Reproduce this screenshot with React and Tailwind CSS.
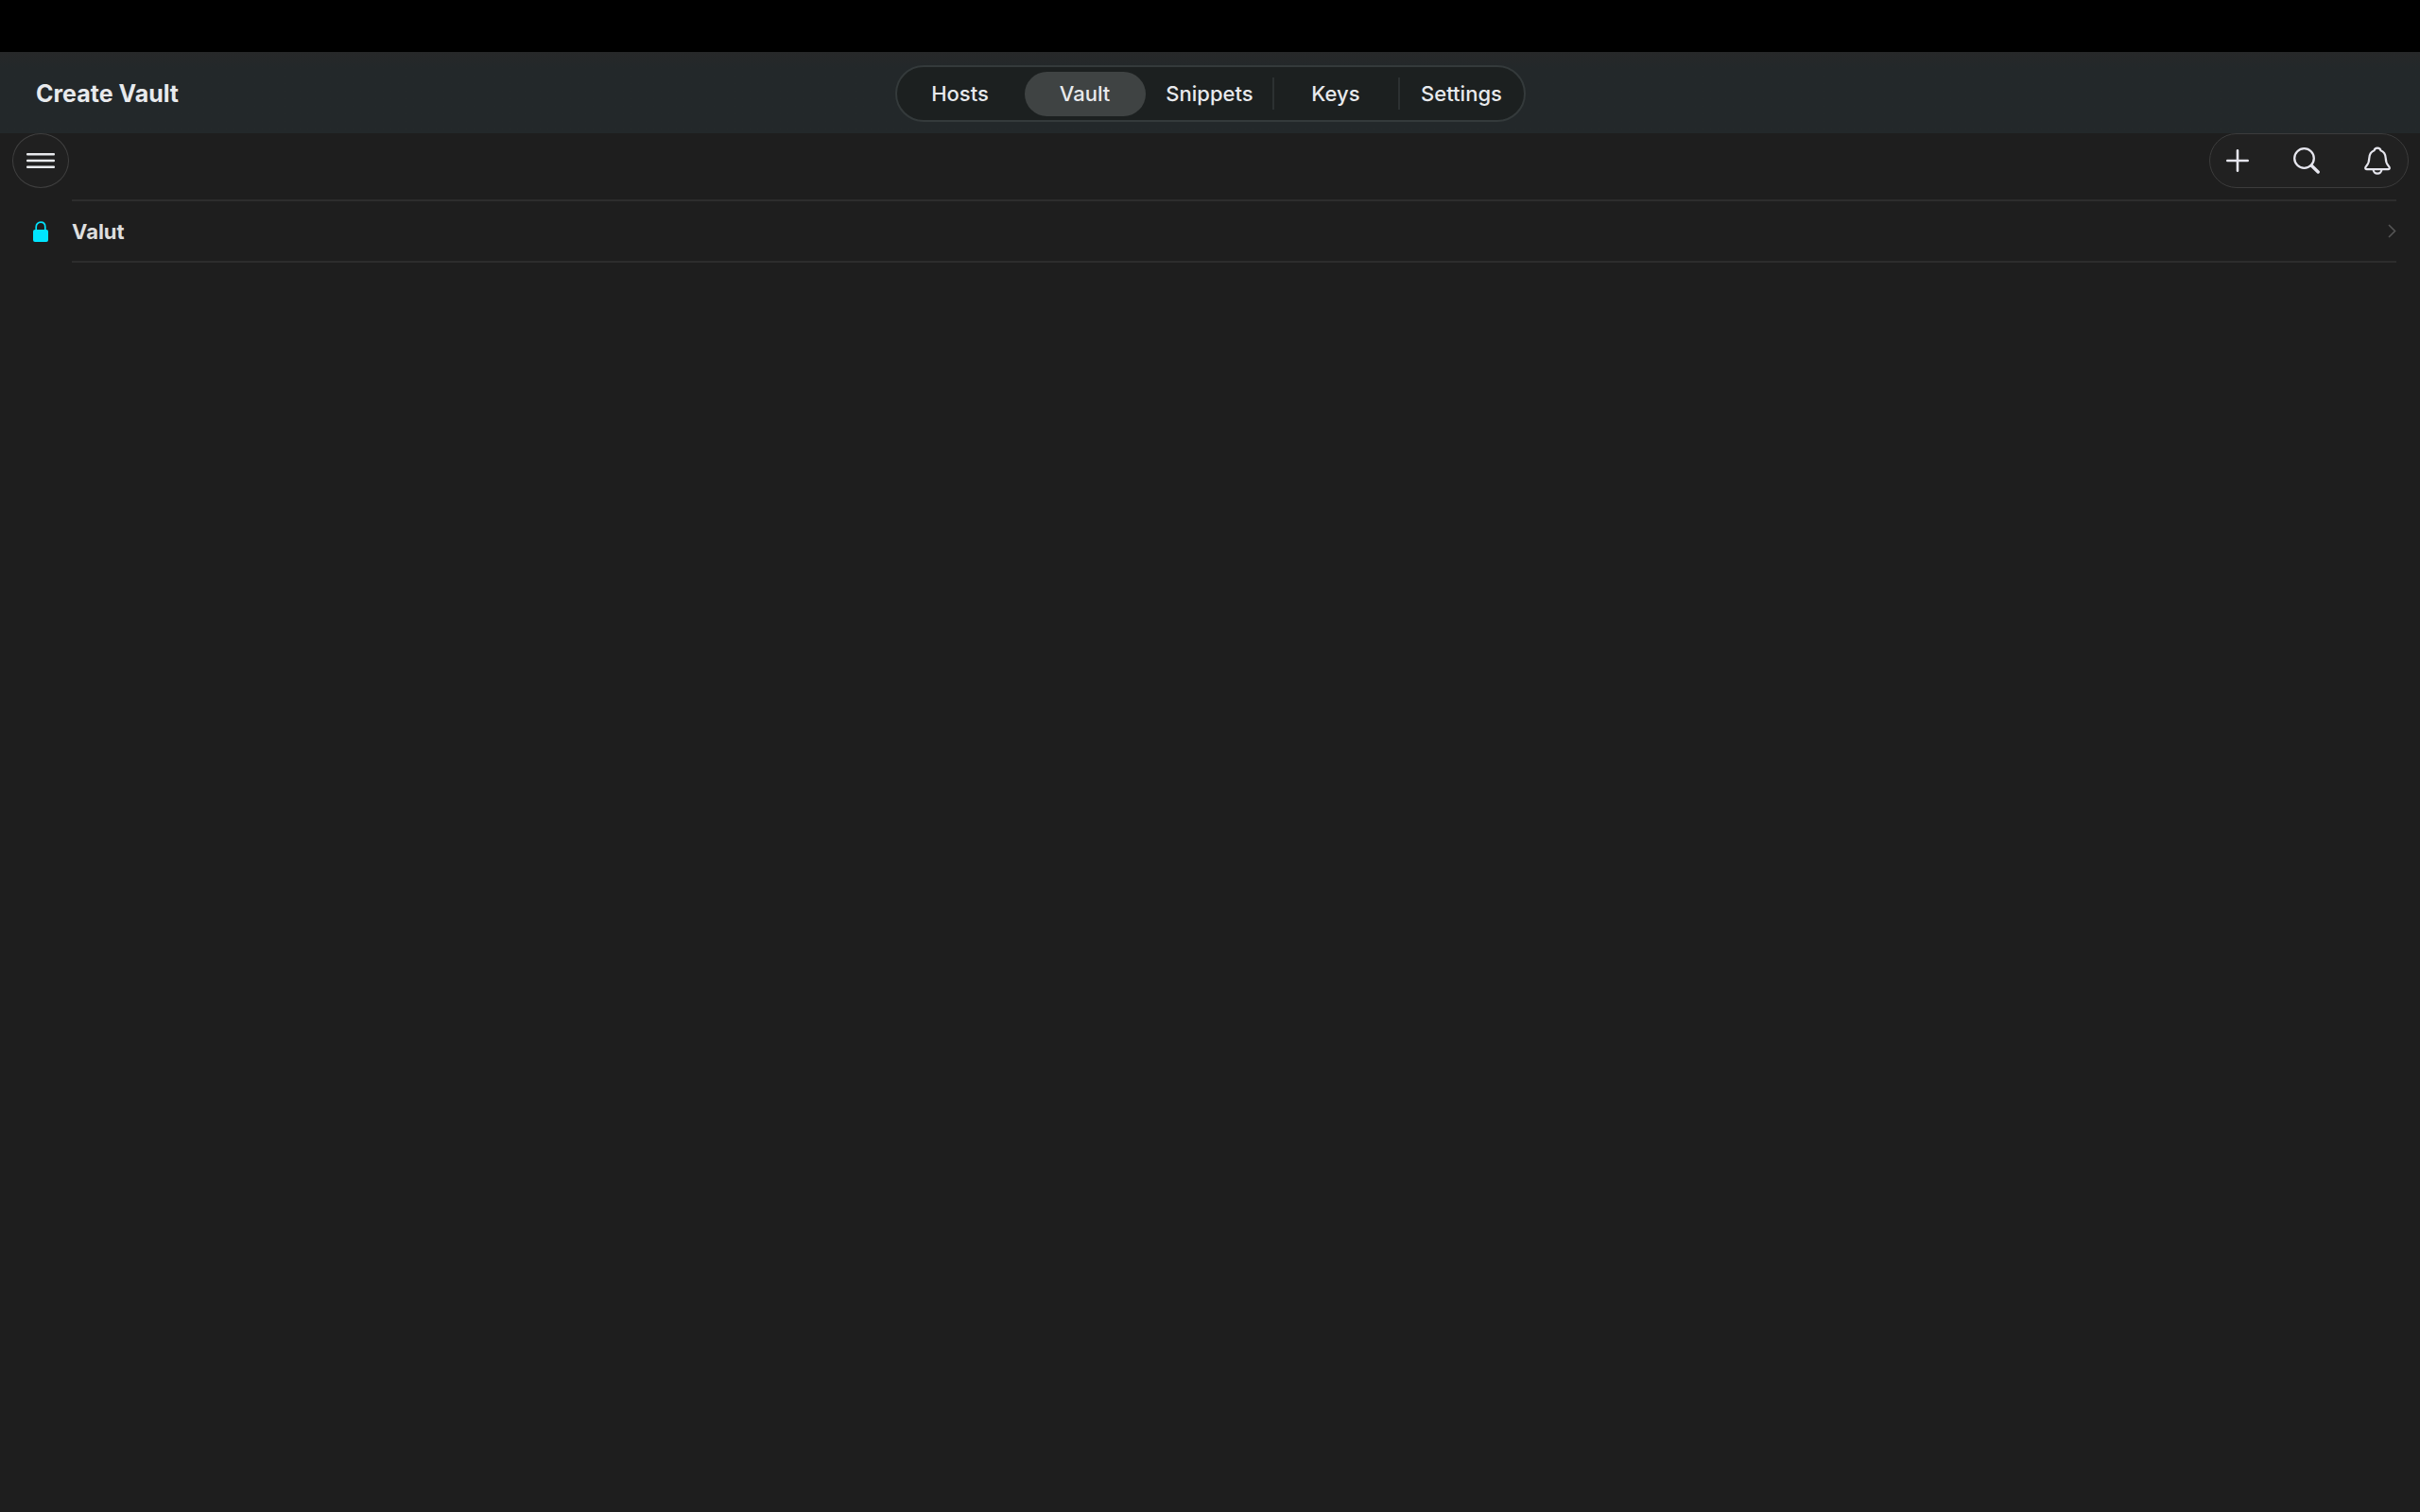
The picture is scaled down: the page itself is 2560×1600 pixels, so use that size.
const tabs = [
  { label: 'Hosts' },
  { label: 'Vault', active: true },
  { label: 'Snippets' },
  { label: 'Keys', divided: true },
  { label: 'Settings', divided: true },
];

function MenuIcon() {
  return (
    <svg className="h-4 w-[30px]" viewBox="0 0 30 16" fill="currentColor" aria-hidden="true">
      <rect width="30" height="2.6" rx="1" />
      <rect y="6.7" width="30" height="2.6" rx="1" />
      <rect y="13.4" width="30" height="2.6" rx="1" />
    </svg>
  );
}

function PlusIcon() {
  return (
    <svg className="size-6" viewBox="0 0 24 24" fill="none" stroke="currentColor" strokeWidth="2.6" strokeLinecap="round" aria-hidden="true">
      <path d="M12 1.3v21.400M1.300 12h21.400" />
    </svg>
  );
}

function SearchIcon() {
  return (
    <svg className="size-7" viewBox="0 0 28 28" fill="none" stroke="currentColor" strokeLinecap="round" aria-hidden="true">
      <circle cx="11.5" cy="11.5" r="10.3" strokeWidth="2.3" />
      <path d="M19.3 19.3 26.2 26" strokeWidth="3.4" />
    </svg>
  );
}

function BellIcon() {
  return (
    <svg className="h-[30px] w-7" viewBox="0 0 28 30" fill="none" stroke="currentColor" strokeWidth="2.2" strokeLinejoin="round" strokeLinecap="round" aria-hidden="true">
      <path d="M14 1.600c-1.800 0-3.200 1.200-3.500 2.700C7.300 5.600 5.500 8.600 5.300 12.300 5.100 16.500 4.600 18.200 2.600 20.300 1.700 21.300 1.200 22 1.200 22.800c0 .8.600 1.300 1.500 1.300h22.600c.9 0 1.500-.5 1.500-1.300 0-.8-.5-1.500-1.400-2.500-2-2.100-2.500-3.800-2.700-8-.2-3.700-2-6.700-5.200-8C17.200 2.800 15.800 1.600 14 1.600Z" />
      <path d="M9.600 24.300c0 2.500 1.900 4.400 4.400 4.400s4.400-1.900 4.400-4.400" />
    </svg>
  );
}

function LockIcon() {
  return (
    <svg className="h-[22px] w-4 text-[#00e5ff]" viewBox="0 0 16 22" aria-hidden="true">
      <path d="M3.200 11V6.200C3.200 3.200 5.200 1.200 8 1.200s4.800 2 4.800 5V11" fill="none" stroke="currentColor" strokeWidth="1.700" />
      <rect y="9" width="16" height="13" rx="2" fill="currentColor" />
    </svg>
  );
}

function ChevronIcon() {
  return (
    <svg className="h-[15px] w-[9px] text-[#555]" viewBox="0 0 9 15" fill="none" stroke="currentColor" strokeWidth="1.600" aria-hidden="true">
      <path d="m1 1 6.500 6.500L1 14" />
    </svg>
  );
}

export default function App() {
  return (
    <div className="min-h-screen bg-[#1e1e1e] font-['Inter',sans-serif] text-[#e8eaed]">
      <div className="h-[55px] bg-black" />

      <header className="grid h-[86px] grid-cols-[1fr_auto_1fr] items-center bg-linear-to-b from-[#272829] via-[#23282a] via-20% to-[#23282a] pt-0.5">
        <h1 className="pl-[38px] text-[25px] leading-8 font-bold">Create Vault</h1>
        <nav aria-label="Sections" className="flex h-[60px] items-center rounded-full border-2 border-[#343a3b] bg-[#1c2020] pl-px">
          {tabs.map((tab) => (
            <div key={tab.label} className={`flex items-center ${tab.divided ? 'w-[133px]' : 'w-[132px]'}`}>
              <span className={tab.divided ? 'h-[34px] w-0.5 bg-[#2c3132]' : 'hidden'} />
              <button
                type="button"
                aria-current={tab.active ? 'page' : undefined}
                className={`mx-0.5 h-[47px] flex-1 rounded-full text-[22px] leading-7 font-medium ${tab.active ? 'bg-[#3f4343]' : ''}`}
              >
                {tab.label}
              </button>
            </div>
          ))}
        </nav>
      </header>

      <main>
        <div className="flex h-[70px] items-start justify-between pr-3 pl-[13px]">
          <button type="button" aria-label="Open menu" className="flex h-[58px] w-[60px] items-center justify-center rounded-[50%] border border-[#404040] bg-[#202020]">
            <MenuIcon />
          </button>
          <div className="flex h-[58px] w-[211px] items-center justify-between rounded-full border border-[#3c3c3c] bg-[#212121] pr-[18px] pl-[17px] text-[#e6e6ee]">
            <button type="button" aria-label="Add vault"><PlusIcon /></button>
            <button type="button" aria-label="Search"><SearchIcon /></button>
            <button type="button" aria-label="Notifications"><BellIcon /></button>
          </div>
        </div>

        <ul>
          <li className="flex">
            <span className="flex w-[76px] shrink-0 items-center pl-[35px]"><LockIcon /></span>
            <a href="#valut" className="mr-[25px] flex h-[67px] flex-1 items-center justify-between border-y-2 border-[#2d2d2d] text-[22px] leading-7 font-bold text-[#dedede]">
              Valut
              <ChevronIcon />
            </a>
          </li>
        </ul>
      </main>
    </div>
  );
}
